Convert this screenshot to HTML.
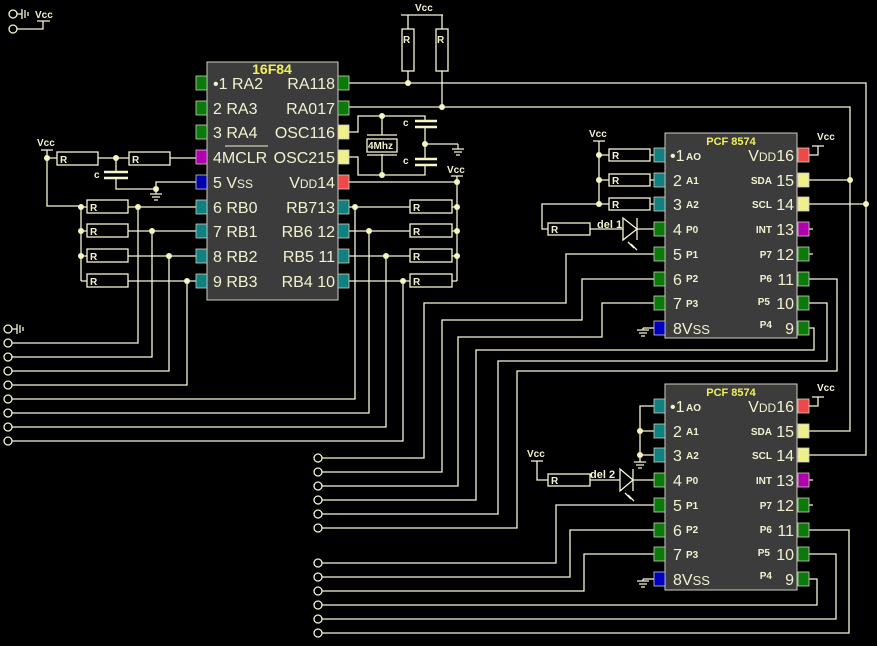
<!DOCTYPE html>
<html><head><meta charset="utf-8"><style>
html,body{margin:0;padding:0;background:#000;}
svg{display:block;}
text{font-family:"Liberation Sans",sans-serif;}
</style></head><body>
<svg width="877" height="646" viewBox="0 0 877 646" xmlns="http://www.w3.org/2000/svg">
<defs>
<g id="gnd"><path d="M0 0V5M-6 5H6M-4 8H4M-2 11H2" stroke="#f5f5d5" stroke-width="1.2" fill="none"/></g>
</defs>
<rect width="877" height="646" fill="#000"/>
<g stroke="#f5f5d5" stroke-width="1.3" fill="none">
<circle cx="13" cy="14" r="4"/><circle cx="13" cy="29" r="4"/>
<path d="M17 14H22M22 9V19M25 10V18M28 12V16M17 29H43V21M37 21H50"/>
<circle cx="8" cy="329" r="4"/><circle cx="8" cy="343" r="4"/><circle cx="8" cy="357" r="4"/><circle cx="8" cy="371" r="4"/><circle cx="8" cy="385" r="4"/><circle cx="8" cy="399" r="4"/><circle cx="8" cy="413" r="4"/><circle cx="8" cy="427" r="4"/><circle cx="8" cy="441" r="4"/>
<path d="M12 329H17M17 324V334M20 325V333M23 327V331"/>
<path d="M12 343H138V207M12 357H152V231M12 371H169V256M12 385H187V281M12 399H355V207M12 413H369V231M12 427H386V256M12 441H403V281"/>
<path d="M41 150H53M47 150V206H81V281M81 207H87M81 231H87M81 256H87M81 281H87M128 207H196M128 231H196M128 256H196M128 281H196"/>
<rect x="87" y="200" width="41" height="13"/><rect x="87" y="224" width="41" height="13"/><rect x="87" y="249" width="41" height="13"/><rect x="87" y="274" width="41" height="13"/>
<path d="M47 158H57M98 158H129M170 158H196M116 158V172M116 178V189H156V182H196"/>
<rect x="57" y="152" width="41" height="13"/><rect x="129" y="152" width="41" height="13"/>
<path d="M349 182H457V281M457 176V182M349 207H410M349 231H410M349 256H410M349 281H410M452 207H457M452 231H457M452 256H457M452 281H457M451 176H463"/>
<rect x="410" y="200" width="42" height="13"/><rect x="410" y="224" width="42" height="13"/><rect x="410" y="249" width="42" height="13"/><rect x="410" y="274" width="42" height="13"/>
<path d="M401 15H443M408 15V29M442 15V29M408 71V83M442 71V107M349 83H866V455H809M349 107H850V431H809M809 180H850M809 204H866"/>
<rect x="402" y="29" width="12" height="42"/><rect x="436" y="29" width="12" height="42"/>
<path d="M349 132H358V116H425V120M349 157H358V175H425V165M382 116V135M382 154V175M425 127V158M425 144H458"/>
<rect x="367" y="139" width="30" height="13"/>
<path d="M367 135H397M367 155H397"/>
<path d="M593 141H605M599 141V204M599 155H609M599 180H609M599 204H609M650 155H654M650 180H654M650 204H654M599 204H542V229H548M590 229H623M637 229H654"/>
<rect x="609" y="149" width="41" height="12"/><rect x="609" y="174" width="41" height="12"/><rect x="609" y="198" width="41" height="12"/><rect x="548" y="223" width="42" height="12"/>
<path d="M623 218L637 229L623 240ZM637 218V240M628 242L634 248M631 244L637 250M634 248L632 245"/>
<path d="M654 254H566V303H424V458H322M654 279H582V320H442V472H322M654 303H602V337H458V486H322M809 328H814V350H476V500H322M809 303H827V361H498V514H322M809 279H837V371H517V528H322"/>
<path d="M654 328H643M637 330H649M639 333H647M641 336H645M643 328V330"/>
<path d="M809 155H818V146M812 146H824M809 229H813M809 254H813"/>
<circle cx="318" cy="458" r="4"/><circle cx="318" cy="472" r="4"/><circle cx="318" cy="486" r="4"/><circle cx="318" cy="500" r="4"/><circle cx="318" cy="514" r="4"/><circle cx="318" cy="528" r="4"/>
<circle cx="318" cy="563" r="4"/><circle cx="318" cy="577" r="4"/><circle cx="318" cy="591" r="4"/><circle cx="318" cy="605" r="4"/><circle cx="318" cy="619" r="4"/><circle cx="318" cy="633" r="4"/>
<path d="M654 406H640V455H654M640 431H654M640 455V462M634 462H646M636 465H644M638 468H642"/>
<path d="M531 461H543M537 461V480H548M590 480H620M633 480H654"/>
<rect x="548" y="474" width="42" height="12"/>
<path d="M620 469L633 480L620 491ZM633 469V491M625 493L631 499M628 495L634 501"/>
<path d="M654 505H556V563H322M654 530H570V577H322M654 554H584V591H322M809 579H817V605H322M809 554H836V619H322M809 530H849V633H322"/>
<path d="M654 579H643M637 581H649M639 584H647M641 587H645M643 579V581"/>
<path d="M809 406H818V397M812 397H824M809 480H813M809 505H813"/>
</g>
<use href="#gnd" x="156" y="189"/>
<use href="#gnd" x="458" y="144"/>
<g stroke="#f5f5c8" stroke-width="2.5">
<path d="M104 172H128M104 178H128M415 121H437M415 127H437M415 159H437M415 165H437"/>
</g>
<g fill="#f5f5c0">
<circle cx="47" cy="158" r="3"/><circle cx="116" cy="158" r="3"/><circle cx="156" cy="189" r="3"/>
<circle cx="81" cy="207" r="3"/><circle cx="81" cy="231" r="3"/><circle cx="81" cy="256" r="3"/>
<circle cx="138" cy="207" r="3"/><circle cx="152" cy="231" r="3"/><circle cx="169" cy="256" r="3"/><circle cx="187" cy="281" r="3"/>
<circle cx="355" cy="207" r="3"/><circle cx="369" cy="231" r="3"/><circle cx="386" cy="256" r="3"/><circle cx="403" cy="281" r="3"/>
<circle cx="457" cy="182" r="3"/><circle cx="457" cy="207" r="3"/><circle cx="457" cy="231" r="3"/><circle cx="457" cy="256" r="3"/>
<circle cx="408" cy="83" r="3"/><circle cx="442" cy="107" r="3"/><circle cx="382" cy="116" r="3"/><circle cx="382" cy="175" r="3"/><circle cx="425" cy="144" r="3"/>
<circle cx="599" cy="155" r="3"/><circle cx="599" cy="180" r="3"/><circle cx="599" cy="204" r="3"/>
<circle cx="850" cy="180" r="3"/><circle cx="866" cy="204" r="3"/>
<circle cx="640" cy="431" r="3"/><circle cx="640" cy="455" r="3"/>
</g>
<rect x="207" y="62" width="131" height="238" fill="#3c3c3c" stroke="#d0d0c0" stroke-width="1"/>
<g stroke="#cfcfbf" stroke-width="0.8">
<rect x="196" y="76" width="11" height="14" fill="#0a7a0a"/><rect x="196" y="101" width="11" height="14" fill="#0a7a0a"/><rect x="196" y="125" width="11" height="14" fill="#0a7a0a"/>
<rect x="196" y="150" width="11" height="14" fill="#b000b0"/><rect x="196" y="175" width="11" height="14" fill="#0000b0"/>
<rect x="196" y="200" width="11" height="14" fill="#118080"/><rect x="196" y="224" width="11" height="14" fill="#118080"/><rect x="196" y="249" width="11" height="14" fill="#118080"/><rect x="196" y="274" width="11" height="14" fill="#118080"/>
<rect x="338" y="76" width="11" height="14" fill="#0a7a0a"/><rect x="338" y="101" width="11" height="14" fill="#0a7a0a"/>
<rect x="338" y="125" width="11" height="14" fill="#f0f08a"/><rect x="338" y="150" width="11" height="14" fill="#f0f08a"/>
<rect x="338" y="175" width="11" height="14" fill="#f04848"/>
<rect x="338" y="200" width="11" height="14" fill="#118080"/><rect x="338" y="224" width="11" height="14" fill="#118080"/><rect x="338" y="249" width="11" height="14" fill="#118080"/><rect x="338" y="274" width="11" height="14" fill="#118080"/>
</g>
<g fill="#f2f2d0" font-size="16">
<text x="213" y="89">•1 RA2</text><text x="213" y="114">2  RA3</text><text x="213" y="138">3 RA4</text><text x="213" y="163">4MCLR</text><text x="213" y="188">5 V<tspan font-size="12">SS</tspan></text>
<text x="213" y="213">6 RB0</text><text x="213" y="237">7 RB1</text><text x="213" y="262">8 RB2</text><text x="213" y="287">9 RB3</text>
<g text-anchor="end"><text x="335" y="89">RA118</text><text x="335" y="114">RA017</text><text x="335" y="138">OSC116</text><text x="335" y="163">OSC215</text><text x="335" y="188">V<tspan font-size="12">DD</tspan>14</text>
<text x="335" y="213">RB713</text><text x="335" y="237">RB6 12</text><text x="335" y="262">RB5 11</text><text x="335" y="287">RB4 10</text></g>
</g>
<path d="M225 146H268" stroke="#f2f2d0" stroke-width="1"/>
<text x="272" y="74" fill="#f0f060" font-size="14" font-weight="bold" text-anchor="middle">16F84</text>
<rect x="665" y="133" width="132" height="205" fill="#3c3c3c" stroke="#d0d0c0"/>
<rect x="665" y="384" width="132" height="206" fill="#3c3c3c" stroke="#d0d0c0"/>
<g stroke="#cfcfbf" stroke-width="0.8">
<rect x="654" y="148" width="11" height="14" fill="#118080"/><rect x="654" y="173" width="11" height="14" fill="#118080"/><rect x="654" y="197" width="11" height="14" fill="#118080"/>
<rect x="654" y="222" width="11" height="14" fill="#0a7a0a"/><rect x="654" y="247" width="11" height="14" fill="#0a7a0a"/><rect x="654" y="272" width="11" height="14" fill="#0a7a0a"/><rect x="654" y="296" width="11" height="14" fill="#0a7a0a"/><rect x="654" y="321" width="11" height="14" fill="#0000c0"/>
<rect x="798" y="148" width="11" height="14" fill="#f04848"/><rect x="798" y="173" width="11" height="14" fill="#f0f08a"/><rect x="798" y="197" width="11" height="14" fill="#f0f08a"/><rect x="798" y="222" width="11" height="14" fill="#b000b0"/>
<rect x="798" y="247" width="11" height="14" fill="#0a7a0a"/><rect x="798" y="272" width="11" height="14" fill="#0a7a0a"/><rect x="798" y="296" width="11" height="14" fill="#0a7a0a"/><rect x="798" y="321" width="11" height="14" fill="#0a7a0a"/>
<rect x="654" y="399" width="11" height="14" fill="#118080"/><rect x="654" y="424" width="11" height="14" fill="#118080"/><rect x="654" y="448" width="11" height="14" fill="#118080"/>
<rect x="654" y="473" width="11" height="14" fill="#0a7a0a"/><rect x="654" y="498" width="11" height="14" fill="#0a7a0a"/><rect x="654" y="523" width="11" height="14" fill="#0a7a0a"/><rect x="654" y="547" width="11" height="14" fill="#0a7a0a"/><rect x="654" y="572" width="11" height="14" fill="#0000c0"/>
<rect x="798" y="399" width="11" height="14" fill="#f04848"/><rect x="798" y="424" width="11" height="14" fill="#f0f08a"/><rect x="798" y="448" width="11" height="14" fill="#f0f08a"/><rect x="798" y="473" width="11" height="14" fill="#b000b0"/>
<rect x="798" y="498" width="11" height="14" fill="#0a7a0a"/><rect x="798" y="523" width="11" height="14" fill="#0a7a0a"/><rect x="798" y="547" width="11" height="14" fill="#0a7a0a"/><rect x="798" y="572" width="11" height="14" fill="#0a7a0a"/>
</g>
<g fill="#f2f2d0">
<text x="731" y="145" fill="#f0f060" font-size="11" font-weight="bold" text-anchor="middle">PCF 8574</text>
<text x="731" y="396" fill="#f0f060" font-size="11" font-weight="bold" text-anchor="middle">PCF 8574</text>
<g font-size="16">
<text x="670" y="161">•1</text><text x="673" y="186">2</text><text x="673" y="210">3</text><text x="673" y="235">4</text><text x="673" y="260">5</text><text x="673" y="285">6</text><text x="673" y="309">7</text><text x="673" y="334">8V<tspan font-size="13">SS</tspan></text>
<text x="670" y="412">•1</text><text x="673" y="437">2</text><text x="673" y="461">3</text><text x="673" y="486">4</text><text x="673" y="511">5</text><text x="673" y="536">6</text><text x="673" y="560">7</text><text x="673" y="585">8V<tspan font-size="13">SS</tspan></text>
<g text-anchor="end">
<text x="794" y="161">V<tspan font-size="12">DD</tspan>16</text><text x="794" y="186">15</text><text x="794" y="210">14</text><text x="794" y="235">13</text><text x="794" y="260">12</text><text x="794" y="285">11</text><text x="794" y="309">10</text><text x="794" y="334">9</text>
<text x="794" y="412">V<tspan font-size="12">DD</tspan>16</text><text x="794" y="437">15</text><text x="794" y="461">14</text><text x="794" y="486">13</text><text x="794" y="511">12</text><text x="794" y="536">11</text><text x="794" y="560">10</text><text x="794" y="585">9</text>
</g></g>
<g font-size="10" font-weight="bold">
<text x="686" y="160">AO</text><text x="686" y="184">A1</text><text x="686" y="208">A2</text><text x="686" y="233">P0</text><text x="686" y="258">P1</text><text x="686" y="282">P2</text><text x="686" y="307">P3</text>
<text x="686" y="411">AO</text><text x="686" y="435">A1</text><text x="686" y="459">A2</text><text x="686" y="484">P0</text><text x="686" y="509">P1</text><text x="686" y="533">P2</text><text x="686" y="558">P3</text>
<g text-anchor="end">
<text x="772" y="184">SDA</text><text x="772" y="208">SCL</text><text x="772" y="233">INT</text><text x="772" y="258">P7</text><text x="772" y="282">P6</text><text x="770" y="305">P5</text><text x="772" y="328">P4</text>
<text x="772" y="435">SDA</text><text x="772" y="459">SCL</text><text x="772" y="484">INT</text><text x="772" y="509">P7</text><text x="772" y="533">P6</text><text x="770" y="556">P5</text><text x="772" y="579">P4</text>
</g></g>
<g font-size="10" font-weight="bold">
<text x="60" y="163">R</text><text x="132" y="163">R</text>
<text x="90" y="211">R</text><text x="90" y="235">R</text><text x="90" y="260">R</text><text x="90" y="285">R</text>
<text x="413" y="211">R</text><text x="413" y="235">R</text><text x="413" y="260">R</text><text x="413" y="285">R</text>
<text x="403" y="43">R</text><text x="437" y="43">R</text>
<text x="612" y="159">R</text><text x="612" y="184">R</text><text x="612" y="208">R</text><text x="551" y="233">R</text><text x="551" y="484">R</text>
<text x="94" y="178">c</text><text x="403" y="126">c</text><text x="403" y="164">c</text>
<text x="368" y="149" font-size="10">4Mhz</text>
<text x="35" y="18">Vcc</text><text x="37" y="146">Vcc</text><text x="415" y="11">Vcc</text><text x="447" y="173">Vcc</text>
<text x="589" y="137">Vcc</text><text x="817" y="140">Vcc</text><text x="817" y="391">Vcc</text><text x="527" y="457">Vcc</text>
<text x="597" y="228" font-size="11">del 1</text><text x="590" y="478" font-size="11">del 2</text>
</g>
</g>
</svg>
</body></html>
